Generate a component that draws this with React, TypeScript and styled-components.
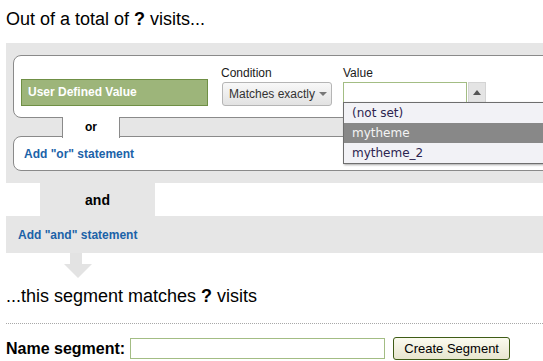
import React from "react";
import styled, { createGlobalStyle } from "styled-components";

const GlobalStyle = createGlobalStyle`
  html, body {
    margin: 0;
    padding: 0;
    overflow: hidden;
    background: #fff;
    font-family: "Liberation Sans", Arial, sans-serif;
  }
`;

const Page = styled.div`
  padding: 9px 0 0 6px;
  width: 537px;
`;

const Title = styled.h1`
  margin: 0;
  font-size: 18px;
  font-weight: normal;
  line-height: 21px;
  color: #000;
  b {
    font-weight: bold;
  }
`;

const Panel = styled.div`
  margin-top: 13px;
  background: #e6e6e6;
  padding: 12px 0 12px 7px;
`;

const Card = styled.div<{ $h: number; $center?: boolean }>`
  box-sizing: border-box;
  height: ${(p) => p.$h}px;
  margin-right: -20px;
  background: #fff;
  border: 1px solid #8a8a8a;
  border-radius: 8px;
  ${(p) => (p.$center ? "display: flex; align-items: center;" : "")}
`;

const CondRow = styled.div`
  display: flex;
  align-items: flex-start;
  padding: 10px 0 0 7px;
`;

const DimBox = styled.div`
  box-sizing: border-box;
  width: 187px;
  height: 27px;
  margin-top: 13px;
  margin-right: 13px;
  background: #9db57a;
  border: 1px solid #6f8f45;
  color: #fff;
  font-weight: bold;
  font-size: 12px;
  line-height: 25px;
  padding-left: 6px;
`;

const Field = styled.div<{ $w: number }>`
  position: relative;
  width: ${(p) => p.$w}px;
  display: flex;
  flex-direction: column;
  gap: 2px;
`;

const Label = styled.div`
  font-size: 12px;
  line-height: 14px;
  color: #1a1a1a;
`;

const SelectBtn = styled.div`
  box-sizing: border-box;
  width: 110px;
  height: 24px;
  margin-left: 1px;
  display: flex;
  align-items: center;
  gap: 4px;
  padding-left: 6px;
  border: 1px solid #b5b5b5;
  border-radius: 3px;
  background: linear-gradient(#f8f8f8, #e2e2e2);
  color: #333;
  font-size: 12px;
`;

const Caret = styled.span<{ $up?: boolean }>`
  width: 0;
  height: 0;
  border-left: 4px solid transparent;
  border-right: 4px solid transparent;
  ${(p) =>
    p.$up ? "border-bottom: 5px solid #555;" : "border-top: 4px solid #777;"}
`;

const InputRow = styled.div`
  display: flex;
`;

const ValueInput = styled.div`
  box-sizing: border-box;
  width: 124px;
  height: 21px;
  border: 1px solid #a3bd84;
  background: #fff;
`;

const SpinBtn = styled.div`
  box-sizing: border-box;
  width: 18px;
  height: 21px;
  margin-left: 1px;
  display: flex;
  align-items: center;
  justify-content: center;
  background: #e4e4e4;
  border: 1px solid #d4d4d4;
`;

const Dropdown = styled.ul`
  position: absolute;
  top: 36px;
  left: 0;
  width: 220px;
  margin: 0;
  padding: 0;
  list-style: none;
  background: #f2f2f6;
  border: 1px solid #6e6e6e;
  box-shadow: 1px 1px 2px rgba(0, 0, 0, 0.35);
  font-family: "DejaVu Sans", sans-serif;
  font-size: 12px;
  z-index: 2;
`;

const Option = styled.li<{ $active?: boolean; $h: number }>`
  height: ${(p) => p.$h}px;
  line-height: ${(p) => p.$h}px;
  padding-left: 8px;
  color: ${(p) => (p.$active ? "#f4f4f4" : "#2c2450")};
  background: ${(p) => (p.$active ? "#888" : "transparent")};
`;

const Connector = styled.div`
  height: 19px;
  padding-left: 49px;
`;

const OrTab = styled.div`
  position: relative;
  z-index: 1;
  box-sizing: border-box;
  width: 58px;
  height: 21px;
  margin-top: -1px;
  background: #fff;
  border-left: 1px solid #8a8a8a;
  border-right: 1px solid #8a8a8a;
  text-align: center;
  font-size: 12px;
  font-weight: bold;
  line-height: 21px;
`;

const AddLink = styled.a<{ $pad: number }>`
  display: block;
  padding-left: ${(p) => p.$pad}px;
  color: #1b62a8;
  font-size: 12px;
  font-weight: bold;
  text-decoration: none;
`;

const AndTab = styled.div`
  width: 115px;
  height: 33px;
  margin-left: 34px;
  background: #e6e6e6;
  text-align: center;
  font-size: 14px;
  font-weight: bold;
  line-height: 34px;
`;

const AndBar = styled.div`
  height: 37px;
  background: #e6e6e6;
  display: flex;
  align-items: center;
`;

const Arrow = styled.svg`
  display: block;
  margin-left: 58px;
`;

const Result = styled(Title)`
  margin-top: 7px;
`;

const Divider = styled.div`
  margin-top: 16px;
  border-top: 1px dotted #a8a8a8;
`;

const NameRow = styled.div`
  display: flex;
  align-items: center;
  margin-top: 13px;
`;

const NameLabel = styled.label`
  font-size: 16px;
  font-weight: bold;
  color: #000;
`;

const NameInput = styled.div`
  box-sizing: border-box;
  width: 255px;
  height: 21px;
  margin-left: 5px;
  border: 1px solid #a3bd84;
`;

const CreateBtn = styled.button`
  box-sizing: border-box;
  width: 117px;
  height: 23px;
  margin-left: 8px;
  padding: 0;
  border: 1px solid #3f5c16;
  border-radius: 3px;
  background: linear-gradient(#fbfbef, #e7e5cf);
  font-family: "Liberation Sans", Arial, sans-serif;
  font-size: 13px;
  color: #000;
`;

export default function App() {
  return (
    <>
      <GlobalStyle />
      <Page>
        <Title>
          Out of a total of <b>?</b> visits...
        </Title>
        <Panel>
          <Card $h={63}>
            <CondRow>
              <DimBox>User Defined Value</DimBox>
              <Field $w={122}>
                <Label>Condition</Label>
                <SelectBtn>
                  Matches exactly <Caret />
                </SelectBtn>
              </Field>
              <Field $w={160}>
                <Label>Value</Label>
                <InputRow>
                  <ValueInput />
                  <SpinBtn>
                    <Caret $up />
                  </SpinBtn>
                </InputRow>
                <Dropdown>
                  <Option $h={20}>(not set)</Option>
                  <Option $h={20} $active>
                    mytheme
                  </Option>
                  <Option $h={20}>mytheme_2</Option>
                </Dropdown>
              </Field>
            </CondRow>
          </Card>
          <Connector>
            <OrTab>or</OrTab>
          </Connector>
          <Card $h={35} $center>
            <AddLink href="#" $pad={10}>
              Add "or" statement
            </AddLink>
          </Card>
        </Panel>
        <AndTab>and</AndTab>
        <AndBar>
          <AddLink href="#" $pad={12}>
            Add "and" statement
          </AddLink>
        </AndBar>
        <Arrow width="28" height="26" viewBox="0 0 28 26">
          <polygon
            points="6,0 18,0 18,11 28,11 14,25 0,11 6,11"
            fill="#e3e3e3"
          />
        </Arrow>
        <Result>
          ...this segment matches <b>?</b> visits
        </Result>
        <Divider />
        <NameRow>
          <NameLabel>Name segment:</NameLabel>
          <NameInput />
          <CreateBtn>Create Segment</CreateBtn>
        </NameRow>
      </Page>
    </>
  );
}
